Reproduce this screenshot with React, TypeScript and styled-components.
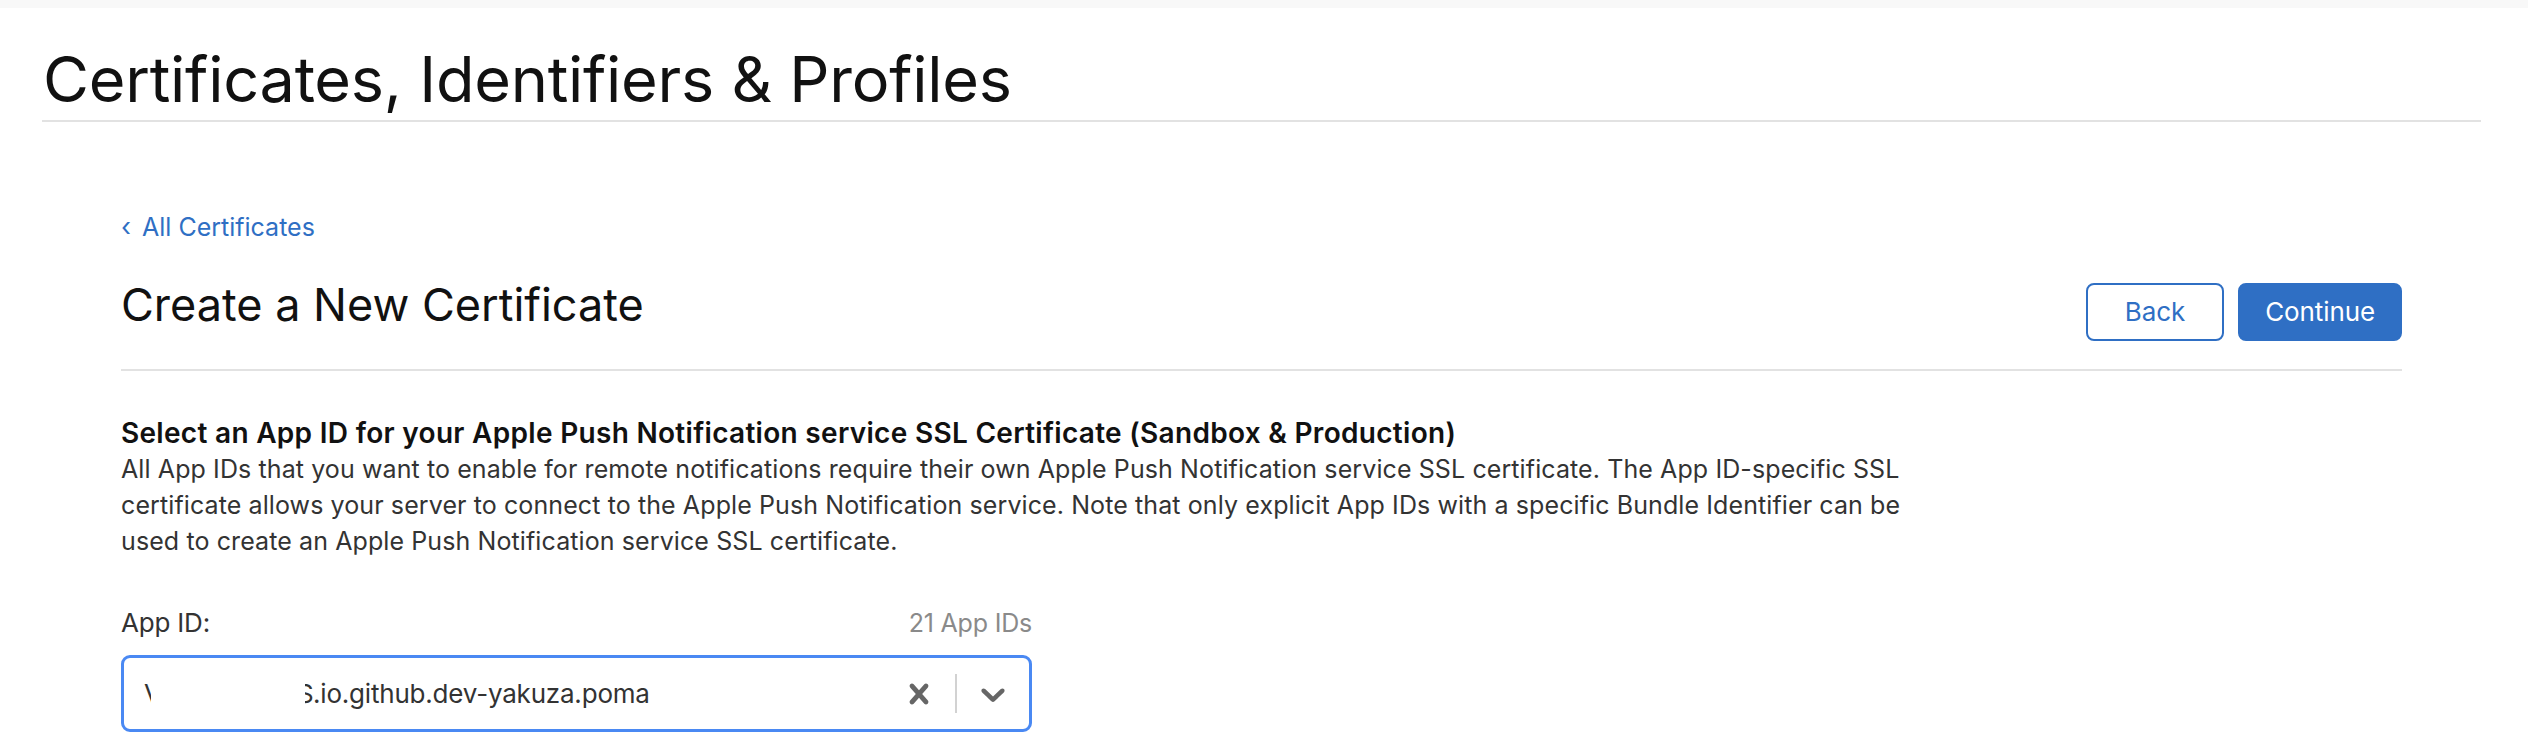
import React, { FC } from "react";
import styled, { createGlobalStyle } from "styled-components";

const GlobalStyle = createGlobalStyle`
    html, body {
        margin: 0;
        padding: 0;
        background: #ffffff;
    }
    body {
        font-family: Inter, "Liberation Sans", sans-serif;
        color: #1d1d1f;
    }
`

const blue = "#2f6fc4";

const TopStrip = styled.div`
    height: 8px;
    background: #f8f8f8;
`

const Header = styled.header`
    padding: 0 47px 0 42px;
`

const PageTitle = styled.h1`
    margin: 0;
    padding: 40px 0 9px 1px;
    font-size: 63px;
    line-height: 1;
    font-weight: 400;
    letter-spacing: -0.25px;
    color: #111111;
    border-bottom: 2px solid #e2e2e2;
`

const Main = styled.main`
    padding: 0 126px 0 121px;
`

const BackLink = styled.a`
    display: inline-block;
    margin-top: 92px;
    font-size: 25px;
    line-height: 1;
    color: ${blue};
    text-decoration: none;
`

const Chevron = styled.span`
    display: inline-block;
    margin-right: 11px;
    font-size: 26px;
`

const HeadRow = styled.div`
    display: flex;
    justify-content: space-between;
    align-items: flex-start;
    margin-top: 43px;
    padding-bottom: 28px;
    border-bottom: 2px solid #e2e2e2;
`

const PageSubtitle = styled.h2`
    margin: -1px 0 0;
    font-size: 45px;
    line-height: 1;
    font-weight: 400;
    letter-spacing: 0;
    color: #111111;
`

const Actions = styled.div`
    display: flex;
    gap: 14px;
`

const Button = styled.button<{ $primary?: boolean }>`
    height: 58px;
    box-sizing: border-box;
    padding: 0 ${p => (p.$primary ? "25px" : "37px")};
    border: 2px solid ${blue};
    border-radius: 8px;
    background: ${p => (p.$primary ? blue : "#ffffff")};
    color: ${p => (p.$primary ? "#ffffff" : blue)};
    font-family: inherit;
    font-size: 26px;
    line-height: 1;
    letter-spacing: -0.1px;
    cursor: pointer;
`

const Section = styled.section`
    margin-top: 44px;
`

const SectionTitle = styled.h3`
    margin: 0;
    font-size: 28px;
    line-height: 36px;
    font-weight: 600;
    letter-spacing: 0.3px;
    color: #111111;
`

const Description = styled.p`
    margin: 0;
    font-size: 25px;
    line-height: 36px;
    letter-spacing: 0.1px;
    color: #333333;
`

const Field = styled.div`
    width: 911px;
    margin-top: 46px;
`

const LabelRow = styled.div`
    display: flex;
    justify-content: space-between;
    align-items: baseline;
`

const Label = styled.label`
    font-size: 26px;
    line-height: 36px;
    letter-spacing: -0.2px;
    color: #333333;
`

const Count = styled.span`
    font-size: 25px;
    line-height: 36px;
    letter-spacing: -0.2px;
    color: #8a8a8a;
`

const SelectBox = styled.div`
    display: flex;
    align-items: center;
    height: 77px;
    box-sizing: border-box;
    margin-top: 14px;
    border: 3px solid #4a89f3;
    border-radius: 9px;
    background: #ffffff;
`

const ValueText = styled.div`
    flex: 1;
    padding-left: 20px;
    font-size: 26px;
    letter-spacing: -0.2px;
    color: #333333;
    white-space: nowrap;
`

const Stub = styled.span<{ $w: number }>`
    display: inline-block;
    width: ${p => p.$w}px;
    overflow: hidden;
    vertical-align: bottom;
`

const Redacted = styled.span<{ $w: number }>`
    display: inline-block;
    width: ${p => p.$w}px;
`

const TailClip = styled.span`
    display: inline-block;
    width: 8px;
    overflow: hidden;
    vertical-align: bottom;

    & > span {
        display: inline-block;
        margin-left: -8px;
    }
`

const Indicator = styled.div`
    display: flex;
    align-items: center;
    justify-content: center;
    width: 72px;
    color: #666666;
`

const IndicatorSeparator = styled.span`
    width: 2px;
    height: 39px;
    background: #d2d2d2;
`

const CrossIcon: FC = () => (
    <svg width="40" height="40" viewBox="0 0 20 20" fill="currentColor" aria-hidden="true">
        <path d="M14.348 14.849c-0.469 0.469-1.229 0.469-1.697 0l-2.651-3.030-2.651 3.029c-0.469 0.469-1.229 0.469-1.697 0-0.469-0.469-0.469-1.229 0-1.697l2.758-3.15-2.759-3.152c-0.469-0.469-0.469-1.228 0-1.697s1.228-0.469 1.697 0l2.652 3.031 2.651-3.031c0.469-0.469 1.228-0.469 1.697 0s0.469 1.229 0 1.697l-2.758 3.152 2.758 3.15c0.469 0.469 0.469 1.229 0 1.698z" />
    </svg>
)

const DownChevron: FC = () => (
    <svg width="40" height="40" viewBox="0 0 20 20" fill="currentColor" aria-hidden="true">
        <path d="M4.516 7.548c0.436-0.446 1.043-0.481 1.576 0l3.908 3.747 3.908-3.747c0.533-0.481 1.141-0.446 1.574 0 0.436 0.445 0.408 1.197 0 1.615-0.406 0.418-4.695 4.502-4.695 4.502-0.217 0.223-0.502 0.335-0.787 0.335s-0.57-0.112-0.789-0.335c0 0-4.287-4.084-4.695-4.502s-0.436-1.170 0-1.615z" />
    </svg>
)

const App: FC = () => {
    return (
        <>
            <GlobalStyle />
            <TopStrip />
            <Header>
                <PageTitle>Certificates, Identifiers &amp; Profiles</PageTitle>
            </Header>
            <Main>
                <BackLink href="#">
                    <Chevron>‹</Chevron>All Certificates
                </BackLink>
                <HeadRow>
                    <PageSubtitle>Create a New Certificate</PageSubtitle>
                    <Actions>
                        <Button>Back</Button>
                        <Button $primary>Continue</Button>
                    </Actions>
                </HeadRow>
                <Section>
                    <SectionTitle>
                        Select an App ID for your Apple Push Notification service SSL Certificate (Sandbox &amp; Production)
                    </SectionTitle>
                    <Description>
                        All App IDs that you want to enable for remote notifications require their own Apple Push Notification service SSL certificate. The App ID-specific SSL
                        <br />
                        certificate allows your server to connect to the Apple Push Notification service. Note that only explicit App IDs with a specific Bundle Identifier can be
                        <br />
                        used to create an Apple Push Notification service SSL certificate.
                    </Description>
                    <Field>
                        <LabelRow>
                            <Label>App ID:</Label>
                            <Count>21 App IDs</Count>
                        </LabelRow>
                        <SelectBox>
                            <ValueText>
                                <Stub $w={7}>V</Stub>
                                <Redacted $w={154} />
                                <TailClip><span>S</span></TailClip>
                                .io.github.dev-yakuza.poma
                            </ValueText>
                            <Indicator><CrossIcon /></Indicator>
                            <IndicatorSeparator />
                            <Indicator><DownChevron /></Indicator>
                        </SelectBox>
                    </Field>
                </Section>
            </Main>
        </>
    )
}

export default App
